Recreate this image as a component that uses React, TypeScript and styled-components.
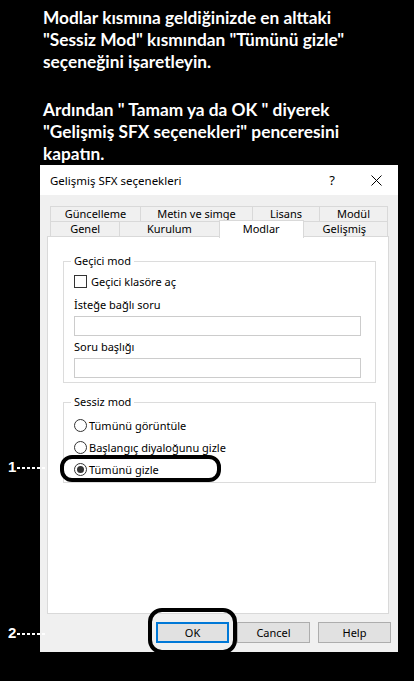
import * as React from "react"
import styled, { createGlobalStyle } from "styled-components"

const GlobalStyle = createGlobalStyle`
    html, body {
        margin: 0;
        padding: 0;
        background: #000;
    }
    #root {
        width: 414px;
        height: 681px;
    }
`

const Page = styled.div`
    position: relative;
    width: 414px;
    height: 681px;
    background: #000;
    overflow: hidden;
    display: flex;
    flex-direction: column;
`

const Instructions = styled.div`
    padding: 7px 0 0 43px;
    color: #fff;
    font-family: Lato, "Liberation Sans", sans-serif;
    font-weight: 700;
    font-size: 17.3px;
    line-height: 22px;
`

const Paragraph = styled.p<{ $gap?: number }>`
    margin: ${(p) => p.$gap || 0}px 0 0 0;
    white-space: nowrap;
`

const Dialog = styled.div`
    margin: 0 0 0 40px;
    width: 358px;
    height: 487px;
    background: #f0f0f0;
    display: flex;
    flex-direction: column;
    font-family: "Noto Sans", "Open Sans", sans-serif;
    font-size: 11px;
    color: #000;
`

const TitleBar = styled.div`
    height: 30px;
    background: #fff;
    display: flex;
    align-items: center;
    padding-left: 10px;
`

const Title = styled.div`
    flex: 1;
    font-size: 11.5px;
`

const TitleButton = styled.div`
    width: 44px;
    height: 30px;
    display: flex;
    align-items: center;
    justify-content: center;
    font-size: 13px;
`

const Body = styled.div`
    flex: 1;
    display: flex;
    flex-direction: column;
    padding: 11px 9px 0 7px;
`

const TabRows = styled.div`
    display: flex;
    flex-direction: column;
    padding-left: 3px;
    width: 338px;
`

const TabRow = styled.div<{ $height: number }>`
    display: flex;
    height: ${(p) => p.$height}px;
    align-items: flex-end;
`

const Tab = styled.div<{ $w: number; $active?: boolean }>`
    position: relative;
    box-sizing: border-box;
    width: ${(p) => p.$w}px;
    height: ${(p) => (p.$active ? 18 : 16)}px;
    margin: ${(p) => (p.$active ? "0 -2px -1px -2px" : "0")};
    z-index: ${(p) => (p.$active ? 2 : 1)};
    background: ${(p) => (p.$active ? "#fff" : "#f0f0f0")};
    border: 1px solid #d9d9d9;
    border-bottom: ${(p) => (p.$active ? "none" : "1px solid #d9d9d9")};
    margin-left: -1px;
    display: flex;
    justify-content: center;
    align-items: flex-start;
    line-height: 13px;
    padding-top: ${(p) => (p.$active ? "1px" : "0")};
    &:first-child {
        margin-left: 0;
    }
`

const Panel = styled.div`
    box-sizing: border-box;
    width: 342px;
    height: 378px;
    background: #fff;
    border: 1px solid #d9d9d9;
    margin-top: -1px;
    padding: 17px 0 0 15px;
    display: flex;
    flex-direction: column;
    align-items: flex-start;
    gap: 12px;
`

const Group = styled.fieldset<{ $h: number; $w: number }>`
    margin: 0;
    box-sizing: border-box;
    width: ${(p) => p.$w}px;
    height: ${(p) => p.$h}px;
    border: 1px solid #dcdcdc;
    padding: 2px 0 0 10px;
    display: flex;
    flex-direction: column;
`

const Legend = styled.legend`
    padding: 0 3px;
    margin-left: -3px;
    line-height: 14px;
    color: #000;
`

const CheckRow = styled.label`
    display: flex;
    align-items: center;
    gap: 4px;
    height: 16px;
    margin-top: 3px;
`

const CheckBox = styled.span`
    box-sizing: border-box;
    flex: none;
    width: 13px;
    height: 13px;
    border: 1px solid #333;
    background: #fff;
`

const FieldLabel = styled.div<{ $gap: number }>`
    margin-top: ${(p) => p.$gap}px;
    line-height: 14px;
`

const TextBox = styled.div`
    box-sizing: border-box;
    margin-top: 4px;
    width: 287px;
    height: 20px;
    border: 1px solid #ccc;
    background: #fff;
`

const RadioRow = styled.label`
    display: flex;
    align-items: center;
    gap: 2px;
    height: 22px;
`

const Radio = styled.span<{ $checked?: boolean }>`
    box-sizing: border-box;
    flex: none;
    width: 13px;
    height: 13px;
    border-radius: 50%;
    border: 1px solid #333;
    background: #fff;
    display: flex;
    align-items: center;
    justify-content: center;
    &::after {
        content: "";
        width: 7px;
        height: 7px;
        border-radius: 50%;
        background: #333;
        display: ${(p) => (p.$checked ? "block" : "none")};
    }
`

const RadioList = styled.div`
    display: flex;
    flex-direction: column;
    margin-top: 3px;
`

const ButtonRow = styled.div`
    display: flex;
    justify-content: flex-end;
    gap: 8px;
    padding: 8px 0 0 0;
    width: 344px;
`

const Button = styled.div<{ $default?: boolean }>`
    box-sizing: border-box;
    width: 73px;
    height: 21px;
    background: #e1e1e1;
    border: ${(p) => (p.$default ? "2px solid #0078d7" : "1px solid #adadad")};
    display: flex;
    align-items: center;
    justify-content: center;
`

const Marker = styled.div<{ $top: number }>`
    position: absolute;
    left: 8px;
    top: ${(p) => p.$top}px;
    color: #fff;
    font-family: "Liberation Sans", sans-serif;
    font-weight: 700;
    font-size: 15px;
    line-height: 16px;
    display: flex;
    align-items: center;
    gap: 1px;
`

const Dashes = styled.span`
    width: 30px;
    height: 2px;
    margin-top: 2px;
    background: repeating-linear-gradient(90deg, #fff 0 3px, transparent 3px 5px);
`

const Callout = styled.div<{ $x: number; $y: number; $w: number; $h: number; $r: number }>`
    position: absolute;
    box-sizing: border-box;
    left: ${(p) => p.$x}px;
    top: ${(p) => p.$y}px;
    width: ${(p) => p.$w}px;
    height: ${(p) => p.$h}px;
    border: 4px solid #000;
    border-radius: ${(p) => p.$r}px;
`

const CloseIcon = () => (
    <svg width="11" height="11" viewBox="0 0 11 11">
        <path d="M0.5 0.5 L10.5 10.5 M10.5 0.5 L0.5 10.5" stroke="#000" strokeWidth="1" />
    </svg>
)

export default function App(): JSX.Element {
    return (
        <Page>
            <GlobalStyle />
            <Instructions>
                <Paragraph>Modlar kısmına geldiğinizde en alttaki</Paragraph>
                <Paragraph>"Sessiz Mod" kısmından "Tümünü gizle"</Paragraph>
                <Paragraph>seçeneğini işaretleyin.</Paragraph>
                <Paragraph $gap={26}>Ardından " Tamam ya da OK " diyerek</Paragraph>
                <Paragraph>"Gelişmiş SFX seçenekleri" penceresini</Paragraph>
                <Paragraph>kapatın.</Paragraph>
            </Instructions>
            <Dialog>
                <TitleBar>
                    <Title>Gelişmiş SFX seçenekleri</Title>
                    <TitleButton>?</TitleButton>
                    <TitleButton>
                        <CloseIcon />
                    </TitleButton>
                </TitleBar>
                <Body>
                    <TabRows>
                        <TabRow $height={16}>
                            <Tab $w={91}>Güncelleme</Tab>
                            <Tab $w={113}>Metin ve simge</Tab>
                            <Tab $w={68}>Lisans</Tab>
                            <Tab $w={69}>Modül</Tab>
                        </TabRow>
                        <TabRow $height={15}>
                            <Tab $w={71}>Genel</Tab>
                            <Tab $w={101}>Kurulum</Tab>
                            <Tab $w={86} $active>
                                Modlar
                            </Tab>
                            <Tab $w={88}>Gelişmiş</Tab>
                        </TabRow>
                    </TabRows>
                    <Panel>
                        <Group $w={313} $h={129}>
                            <Legend>Geçici mod</Legend>
                            <CheckRow>
                                <CheckBox />
                                Geçici klasöre aç
                            </CheckRow>
                            <FieldLabel $gap={9}>İsteğe bağlı soru</FieldLabel>
                            <TextBox />
                            <FieldLabel $gap={4}>Soru başlığı</FieldLabel>
                            <TextBox />
                        </Group>
                        <Group $w={313} $h={88}>
                            <Legend>Sessiz mod</Legend>
                            <RadioList>
                                <RadioRow>
                                    <Radio />
                                    Tümünü görüntüle
                                </RadioRow>
                                <RadioRow>
                                    <Radio />
                                    Başlangıç diyaloğunu gizle
                                </RadioRow>
                                <RadioRow>
                                    <Radio $checked />
                                    Tümünü gizle
                                </RadioRow>
                            </RadioList>
                        </Group>
                    </Panel>
                    <ButtonRow>
                        <Button $default>OK</Button>
                        <Button>Cancel</Button>
                        <Button>Help</Button>
                    </ButtonRow>
                </Body>
            </Dialog>
            <Marker $top={459}>
                1<Dashes />
            </Marker>
            <Marker $top={625}>
                2<Dashes />
            </Marker>
            <Callout $x={60} $y={455} $w={161} $h={27} $r={12} />
            <Callout $x={148} $y={608} $w={89} $h={46} $r={14} />
        </Page>
    )
}
